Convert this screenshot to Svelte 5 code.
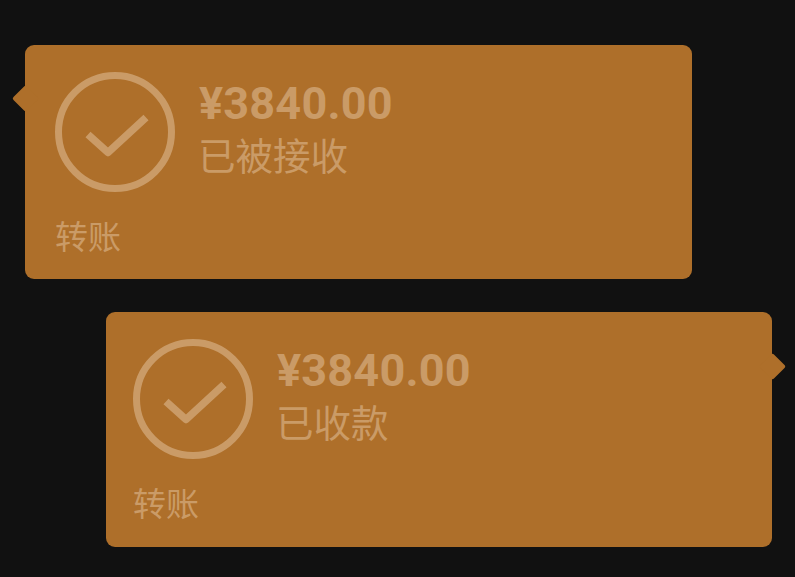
<script>
	// Transfer bubbles, one from each side of the chat
	const transfers = [
		{ side: 'left', amount: '¥3840.00', status: '已被接收' },
		{ side: 'right', amount: '¥3840.00', status: '已收款' }
	];
</script>

<div class="chat">
	{#each transfers as t}
		<div class="bubble {t.side}">
			<div class="main">
				<svg class="icon" viewBox="0 0 120 120" width="120" height="120" aria-hidden="true">
					<circle cx="60" cy="60" r="56.5" fill="none" stroke="currentColor" stroke-width="7" />
					<path d="M33 62.5 L53 80.5 L91 45.5" fill="none" stroke="currentColor" stroke-width="7.5" stroke-linejoin="round" />
				</svg>
				<div class="info">
					<div class="amount">{t.amount}</div>
					<div class="status">{t.status}</div>
				</div>
			</div>
			<div class="label">转账</div>
		</div>
	{/each}
</div>

<style>
	:global(body) {
		background: #111111;
	}

	.chat {
		display: flex;
		flex-direction: column;
		gap: 33px;
		height: 577px;
		box-sizing: border-box;
		padding: 45px 23px 0 25px;
		background: #111111;
		overflow: hidden;
		font-family: "Noto Sans CJK SC", "Noto Sans", sans-serif;
		color: #ca9b67;
	}

	.bubble {
		position: relative;
		box-sizing: border-box;
		width: 667px;
		height: 234px;
		padding: 27px 30px 0;
		border-radius: 9px;
		background: #ae6f2a;
	}

	.bubble.right {
		align-self: flex-end;
		width: 666px;
		height: 235px;
		padding-left: 27px;
	}

	.bubble::after {
		content: "";
		position: absolute;
		top: 44px;
		width: 19px;
		height: 19px;
		border-radius: 2px;
		background: #ae6f2a;
		transform: rotate(45deg);
	}

	.bubble.left::after {
		left: -9.5px;
	}

	.bubble.right::after {
		right: -9.5px;
		top: 45px;
	}

	.main {
		display: flex;
		gap: 24px;
	}

	.icon {
		display: block;
		flex: none;
	}

	.info {
		padding-top: 7px;
	}

	.amount {
		font-family: Roboto, sans-serif;
		font-weight: 700;
		font-size: 45px;
		line-height: 50px;
		letter-spacing: 0.2px;
	}

	.status {
		margin-left: -1px;
		font-size: 37.5px;
		line-height: 50px;
	}

	.label {
		margin-top: 21px;
		font-size: 33px;
		line-height: 44px;
	}
</style>
